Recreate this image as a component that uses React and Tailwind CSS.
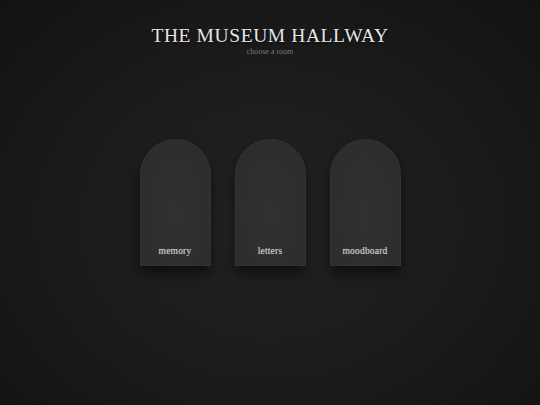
export default function App() {
  const rooms = ["memory", "letters", "moodboard"];
  return (
    <div
      className="w-[540px] h-[405px] overflow-hidden flex flex-col items-center bg-[radial-gradient(ellipse_at_50%_55%,#232323_0%,#1c1c1c_45%,#121212_100%)]"
      style={{ fontFamily: '"Liberation Serif", "DejaVu Serif", serif' }}
    >
      <h1 className="mt-[24px] text-[19.5px] leading-[23px] tracking-[0.6px] text-[#e6e6e6] [text-shadow:0_1px_2px_rgba(0,0,0,0.6)]">
        THE MUSEUM HALLWAY
      </h1>
      <p className="mt-[0px] text-[8px] leading-[10px] text-[#7a7a7a]">
        choose a room
      </p>
      <div className="mt-[82px] flex gap-[24px]">
        {rooms.map((r) => (
          <div
            key={r}
            className="w-[71px] h-[127px] rounded-t-[36px] bg-[radial-gradient(ellipse_at_50%_60%,#313131_0%,#2e2e2e_60%,#2b2b2b_100%)] border border-[#333333] shadow-[0_8px_14px_rgba(0,0,0,0.55)] flex flex-col justify-end items-center pb-[8px]"
          >
            <span className="text-[9.5px] leading-[12px] tracking-[0.2px] text-[#cfcfcf] [text-shadow:0_0_1px_rgba(220,220,220,0.5)]">{r}</span>
          </div>
        ))}
      </div>
    </div>
  );
}
